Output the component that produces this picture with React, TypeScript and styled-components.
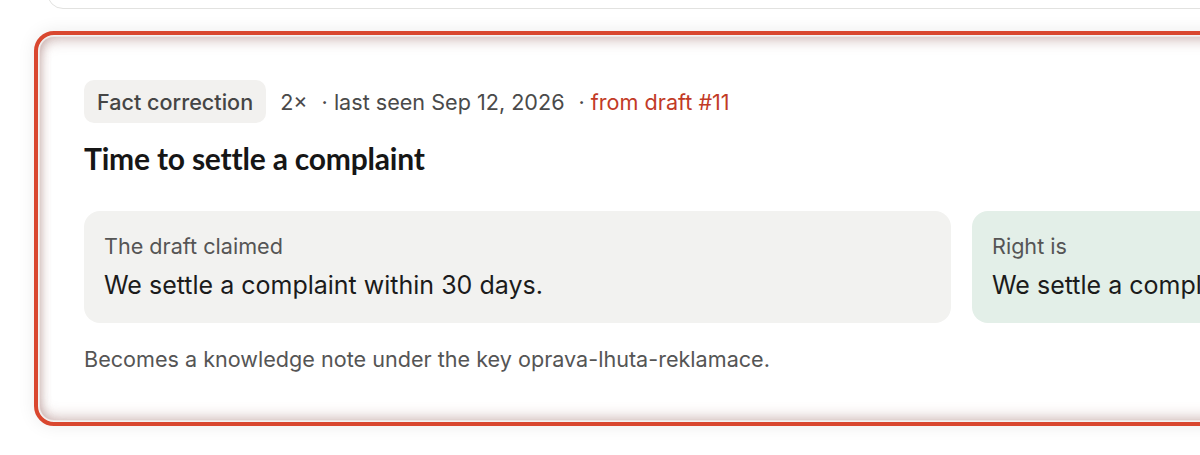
import React from 'react';
import styled, { createGlobalStyle } from 'styled-components';

const GlobalStyle = createGlobalStyle`
  html, body {
    margin: 0;
    padding: 0;
    background: #ffffff;
    overflow: hidden;
  }
  body {
    font-family: Inter, 'Noto Sans', sans-serif;
    color: #1c1c1c;
  }
`;

const Page = styled.div`
  width: 1200px;
  height: 455px;
  overflow: hidden;
`;

const List = styled.div`
  display: flex;
  flex-direction: column;
  gap: 28px;
  margin-top: -31px;
  padding-left: 40px;
`;

const PrevCard = styled.div`
  height: 40px;
  width: 1800px;
  margin-left: 7px;
  border: 1px solid #e2e2e0;
  border-radius: 16px;
  background: #fff;
  box-sizing: border-box;
`;

const Card = styled.article`
  width: 1844px;
  box-sizing: border-box;
  padding: 43px 44px 47px;
  border-radius: 14px;
  background: #fff;
  outline: 4px solid #d9472f;
  outline-offset: 2px;
  box-shadow:
    inset 0 7px 14px -4px rgba(150, 100, 95, 0.4),
    inset 0 -7px 14px -4px rgba(150, 100, 95, 0.36),
    inset 6px 0 12px -6px rgba(150, 100, 95, 0.3),
    0 0 0 1px #ece7e5,
    0 0 18px 6px rgba(0, 0, 0, 0.08);
`;

const Meta = styled.div`
  display: flex;
  align-items: center;
  gap: 14px;
  font-size: 21.6px;
  color: #4a4a4a;
`;

const Badge = styled.span`
  display: inline-flex;
  align-items: center;
  height: 43px;
  padding: 0 13px;
  border-radius: 10px;
  background: #f2f1ef;
  color: #454545;
  font-weight: 500;
`;

const MetaItem = styled.span`
  color: #4a4a4a;
`;

const DraftLink = styled.span`
  color: #c23a26;
`;

const Title = styled.h2`
  margin: 16px 0 0;
  font-family: Lato, Inter, sans-serif;
  font-size: 30px;
  line-height: 38px;
  font-weight: 700;
  letter-spacing: -0.2px;
  color: #161616;
`;

const Compare = styled.div`
  display: grid;
  grid-template-columns: 867px 867px;
  gap: 21px;
  margin-top: 34px;
`;

const Box = styled.div<{ $tone: 'draft' | 'right' }>`
  height: 112px;
  box-sizing: border-box;
  padding: 21px 20px;
  border-radius: 16px;
  background: ${(p) => (p.$tone === 'right' ? '#e3efe8' : '#f2f2f0')};
  display: flex;
  flex-direction: column;
  gap: 9px;
`;

const BoxLabel = styled.div`
  font-size: 21.6px;
  color: #555;
  line-height: 28px;
`;

const BoxValue = styled.div`
  font-size: 25px;
  color: #1b1b1b;
  line-height: 32px;
`;

const Footnote = styled.p`
  margin: 22px 0 0;
  font-size: 21.6px;
  color: #555;
  line-height: 28px;
`;

export default function App() {
  return (
    <Page>
      <GlobalStyle />
      <List>
        <PrevCard />
        <Card>
          <Meta>
            <Badge>Fact correction</Badge>
            <MetaItem>2×</MetaItem>
            <MetaItem>· last seen Sep 12, 2026</MetaItem>
            <MetaItem>
              · <DraftLink>from draft #11</DraftLink>
            </MetaItem>
          </Meta>
          <Title>Time to settle a complaint</Title>
          <Compare>
            <Box $tone="draft">
              <BoxLabel>The draft claimed</BoxLabel>
              <BoxValue>We settle a complaint within 30 days.</BoxValue>
            </Box>
            <Box $tone="right">
              <BoxLabel>Right is</BoxLabel>
              <BoxValue>We settle a complaint within 14 days.</BoxValue>
            </Box>
          </Compare>
          <Footnote>Becomes a knowledge note under the key oprava-lhuta-reklamace.</Footnote>
        </Card>
      </List>
    </Page>
  );
}
